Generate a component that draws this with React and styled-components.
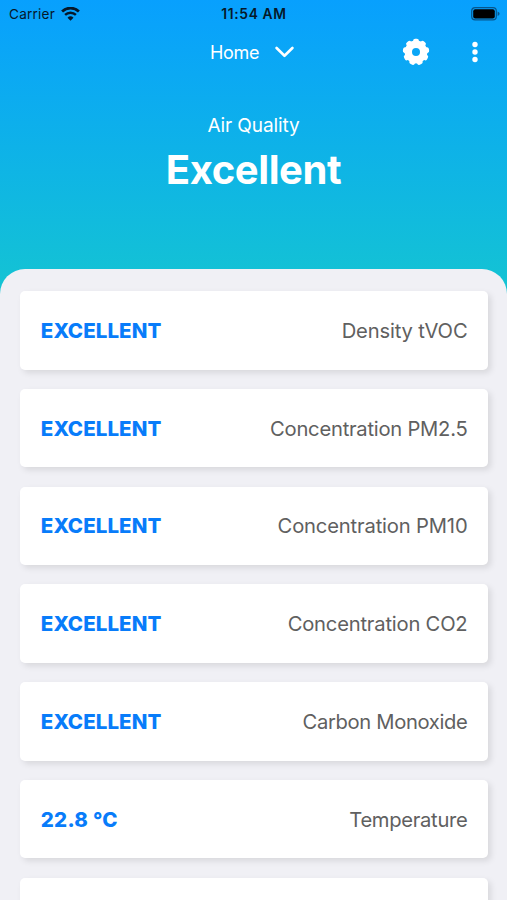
import React from 'react'
import styled, { createGlobalStyle } from "styled-components";

const GlobalStyle = createGlobalStyle`
*{
  box-sizing:border-box;
}
body{
  margin:0;
  background:#f0f0f5;
}
`;

const Screen = styled.div`
height:900px;
overflow:hidden;
display:flex;
flex-direction:column;
font-family:Inter, "Liberation Sans", sans-serif;
background:linear-gradient(180deg, #08a0fe 0px, #13c1d6 270px, #14c6d2 300px);
`;
const StatusBar = styled.div`
height:28px;
padding:0 7px 0 9px;
display:grid;
grid-template-columns:1fr auto 1fr;
align-items:center;
color:#06182a;
`;
const Carrier = styled.div`
display:flex;
align-items:center;
gap:6px;
font-size:13.6px;
letter-spacing:0.2px;
`;
const Clock = styled.div`
font-size:13.8px;
font-weight:600;
letter-spacing:0.65px;
margin-right:1px;
`;
const Battery = styled.svg`
justify-self:end;
`;
const NavBar = styled.div`
height:48px;
padding:0 19px 0 16px;
display:grid;
grid-template-columns:1fr auto 1fr;
align-items:center;
color:#fff;
`;
const Place = styled.div`
grid-column:2;
display:flex;
align-items:center;
gap:16px;
font-size:18px;
letter-spacing:-0.3px;
`;
const Actions = styled.div`
justify-self:end;
display:flex;
align-items:center;
gap:31.7px;
`;
const Summary = styled.div`
height:193px;
padding-top:38px;
display:flex;
flex-direction:column;
align-items:center;
color:#fff;
`;
const Caption = styled.div`
font-size:19px;
line-height:24px;
letter-spacing:-0.1px;
`;
const Quality = styled.h1`
margin:7px 0 0;
font-size:40px;
line-height:50px;
font-weight:700;
letter-spacing:-0.4px;
`;
const Sheet = styled.div`
flex:1;
min-height:0;
overflow:hidden;
padding:22.2px 19.5px 0 20.3px;
display:flex;
flex-direction:column;
gap:19.25px;
border-radius:25px 25px 0 0;
background:#f0f0f5;
`;
const Card = styled.div`
flex:none;
height:78.5px;
padding:0 20px 0 20.5px;
display:flex;
align-items:center;
justify-content:space-between;
border-radius:5px;
background:#fff;
box-shadow:3px 3px 6px rgba(0,0,0,0.1);
`;
const Value = styled.div`
color:#087cfa;
font-size:20.5px;
font-weight:800;
letter-spacing:${props => props.$spacing};
`;
const Label = styled.div`
color:#606060;
font-size:20.2px;
letter-spacing:${props => props.$spacing || "-0.24px"};
`;

const readings = [
  { label: "Density tVOC", value: "EXCELLENT", spacing: "-0.15px" },
  { label: "Concentration PM2.5", value: "EXCELLENT" },
  { label: "Concentration PM10", value: "EXCELLENT", spacing: "-0.16px" },
  { label: "Concentration CO2", value: "EXCELLENT", spacing: "-0.2px" },
  { label: "Carbon Monoxide", value: "EXCELLENT", spacing: "-0.34px" },
  { label: "Temperature", value: "22.8 °C", spacing: "-0.3px" },
  { label: "", value: "" },
];

const teeth = [0, 40, 80, 120, 160, 200, 240, 280, 320];

function WifiIcon() {
  return (
    <svg width="19" height="14" viewBox="0 0 19 14" fill="none" stroke="#06182a">
      <path d="M1.1 4.5 A12 12 0 0 1 17.9 4.5" strokeWidth="2.7" />
      <path d="M4.1 7.9 A7.7 7.7 0 0 1 14.9 7.9" strokeWidth="2.4" />
      <path d="M9.5 13.8 L6.5 10.7 A4.3 4.3 0 0 1 12.5 10.7 Z" fill="#06182a" stroke="none" />
    </svg>
  )
}

function BatteryIcon() {
  return (
    <Battery width="29" height="14" viewBox="0 0 29 14">
      <rect x="0.7" y="0.7" width="24.6" height="12.2" rx="3.4" fill="none" stroke="#06568d" strokeWidth="1.2" />
      <rect x="2.2" y="2.2" width="21.6" height="9.2" rx="2" fill="#000" />
      <path d="M26.6 4.6 Q28.6 5.4 28.6 6.8 Q28.6 8.2 26.6 9 Z" fill="#06568d" />
    </Battery>
  )
}

function GearIcon() {
  return (
    <svg width="28" height="28" viewBox="-14 -14 28 28">
      <circle r="7.7" fill="none" stroke="#fff" strokeWidth="7.4" />
      {teeth.map(angle => (
        <rect key={angle} x="-2.9" y="-13.2" width="5.8" height="6" rx="2" fill="#fff" transform={`rotate(${angle})`} />
      ))}
    </svg>
  )
}

function App() {
  return (
    <>
      <GlobalStyle />
      <Screen>
        <StatusBar>
          <Carrier>Carrier <WifiIcon /></Carrier>
          <Clock>11:54 AM</Clock>
          <BatteryIcon />
        </StatusBar>
        <NavBar>
          <Place>
            Home
            <svg width="19" height="12" viewBox="0 0 19 12" fill="none" stroke="#fff" strokeWidth="2.6" strokeLinecap="round" strokeLinejoin="round">
              <path d="M1.6 2 L9.5 9.8 L17.4 2" />
            </svg>
          </Place>
          <Actions>
            <GearIcon />
            <svg width="26" height="22" viewBox="0 0 26 22" fill="#fff">
              <circle cx="13" cy="3.5" r="2.7" />
              <circle cx="13" cy="11" r="2.7" />
              <circle cx="13" cy="18.5" r="2.7" />
            </svg>
          </Actions>
        </NavBar>
        <Summary>
          <Caption>Air Quality</Caption>
          <Quality>Excellent</Quality>
        </Summary>
        <Sheet>
          {readings.map((item, i) => (
            <Card key={i}>
              <Value $spacing={item.value === "EXCELLENT" ? "0.08px" : "0.25px"}>{item.value}</Value>
              <Label $spacing={item.spacing}>{item.label}</Label>
            </Card>
          ))}
        </Sheet>
      </Screen>
    </>
  )
}

export default App
